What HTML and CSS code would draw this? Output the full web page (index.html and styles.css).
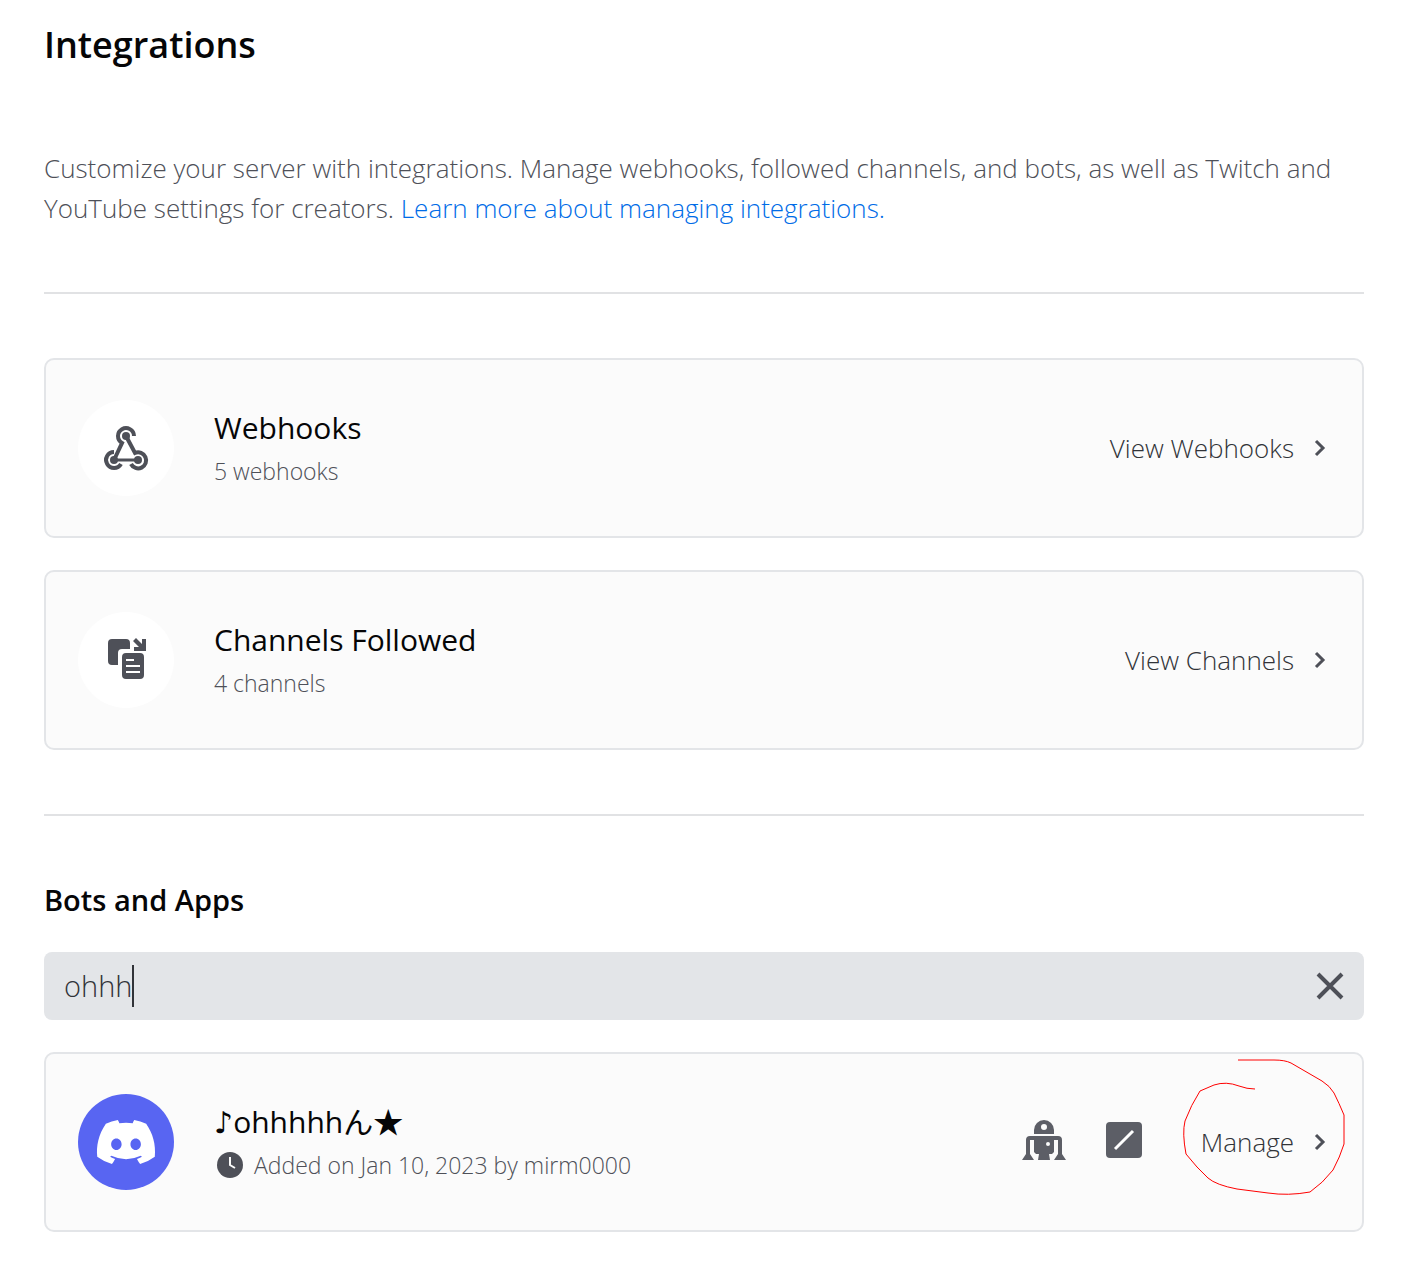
FILE: index.html
```html
<!DOCTYPE html>
<html lang="en">
<head>
<meta charset="utf-8">
<title>Integrations</title>
<link rel="stylesheet" href="styles.css">
</head>
<body>
<main class="page">
  <h1 class="page-title">Integrations</h1>
  <p class="intro">Customize your server with integrations. Manage webhooks, followed channels, and bots, as well as Twitch and YouTube settings for creators. <a class="link" href="#learn">Learn more about managing integrations.</a></p>
  <hr class="divider">
  <section class="cards">
    <article class="card">
      <span class="badge">
        <svg width="48" height="48" viewBox="0 0 48 48" fill="none" stroke="currentColor" stroke-width="4" aria-hidden="true">
          <path d="M32 12A8 8 0 1 0 20 19L12 36"/>
          <path d="M24 12L33 29A8 8 0 1 1 29 40"/>
          <path d="M12 28A8 8 0 1 0 19 40"/>
          <path d="M12 36H36" stroke-width="3"/>
          <g fill="currentColor" stroke="none"><circle cx="24" cy="12" r="4"/><circle cx="12" cy="36" r="4"/><circle cx="36" cy="36" r="4"/></g>
        </svg>
      </span>
      <div class="info">
        <h2 class="name">Webhooks</h2>
        <p class="detail">5 webhooks</p>
      </div>
      <button class="action" type="button">View Webhooks
        <svg width="20" height="20" viewBox="0 0 20 20" aria-hidden="true"><path class="chevron" d="M6 3L13 10L6 17"/></svg>
      </button>
    </article>
    <article class="card">
      <span class="badge">
        <svg width="48" height="48" viewBox="0 12 48 48" fill="currentColor" aria-hidden="true">
          <path d="M10 15H24Q28 15 28 19V25H20Q16 25 16 29V41H10Q6 41 6 37V19Q6 15 10 15Z"/>
          <path fill-rule="evenodd" d="M24 29H38Q42 29 42 33V51Q42 55 38 55H24Q20 55 20 51V33Q20 29 24 29ZM24 35V37H32V35ZM24 41V43H38V41ZM24 47V49H38V47Z"/>
          <path d="M34 14L40 20V15H44V27H32V23H37L31 17Z"/>
        </svg>
      </span>
      <div class="info">
        <h2 class="name">Channels Followed</h2>
        <p class="detail">4 channels</p>
      </div>
      <button class="action" type="button">View Channels
        <svg width="20" height="20" viewBox="0 0 20 20" aria-hidden="true"><path class="chevron" d="M6 3L13 10L6 17"/></svg>
      </button>
    </article>
  </section>
  <hr class="divider">
  <section class="bots">
    <h2 class="section-title"><label for="bot-search">Bots and Apps</label></h2>
    <div class="search">
      <input class="search-input" id="bot-search" type="text" value="ohhh" size="4">
      <span class="caret"></span>
      <button class="clear" type="button" aria-label="Clear">
        <svg width="28" height="28" viewBox="0 0 28 28" aria-hidden="true"><path d="M2 2L26 26M26 2L2 26" stroke="currentColor" stroke-width="4"/></svg>
      </button>
    </div>
    <article class="card">
      <span class="badge badge-discord">
        <svg width="58" height="44" viewBox="0 0 127 96" fill="currentColor" aria-hidden="true"><path d="M107.7 8.07A105.15 105.15 0 0 0 81.47 0a72.06 72.06 0 0 0-3.36 6.83 97.68 97.68 0 0 0-29.11 0A72.37 72.37 0 0 0 45.64 0a105.89 105.89 0 0 0-26.25 8.09C2.79 32.65-1.71 56.6.54 80.21a105.73 105.73 0 0 0 32.17 16.15 77.7 77.7 0 0 0 6.89-11.11 68.42 68.42 0 0 1-10.85-5.18c.91-.66 1.8-1.34 2.66-2a75.57 75.57 0 0 0 64.32 0c.87.71 1.76 1.39 2.66 2a68.68 68.68 0 0 1-10.87 5.19 77 77 0 0 0 6.89 11.1 105.25 105.25 0 0 0 32.19-16.14c2.64-27.38-4.51-51.11-18.9-72.15ZM42.45 65.69C36.18 65.69 31 60 31 53s5-12.74 11.43-12.74S54 46 53.89 53s-5.05 12.69-11.44 12.69Zm42.24 0C78.41 65.69 73.25 60 73.25 53s5-12.74 11.44-12.74S96.23 46 96.12 53s-5.04 12.69-11.43 12.69Z"/></svg>
      </span>
      <div class="info">
        <h2 class="name"><span class="note">♪</span>ohhhhhん★</h2>
        <p class="detail detail-added">
          <svg width="32" height="32" viewBox="0 0 32 32" aria-hidden="true"><circle cx="16" cy="16" r="13" fill="#4e5058"/><path d="M16 8V16L21 19" fill="none" stroke="#fbfbfb" stroke-width="2"/></svg>
          Added on Jan 10, 2023 by mirm0000
        </p>
      </div>
      <div class="features">
        <svg width="44" height="44" viewBox="0 0 44 44" fill="currentColor" aria-hidden="true">
          <path fill-rule="evenodd" d="M12 16V12A10 10 0 0 1 32 12V16ZM22 6A3 3 0 1 0 22 12A3 3 0 1 0 22 6Z"/>
          <path fill-rule="evenodd" d="M8 18H36Q40 18 40 22V36L44 42H32L36 36V22H32V34L30 36H27L28 42H16L17 36H14L12 34V22H8V36L12 42H0L4 36V22Q4 18 8 18ZM26 24A2 2 0 1 0 26 28A2 2 0 1 0 26 24Z"/>
        </svg>
        <svg width="36" height="36" viewBox="0 0 36 36" aria-hidden="true"><rect width="36" height="36" rx="4" fill="currentColor"/><path d="M9 27L27 9" stroke="#fff" stroke-width="3"/></svg>
      </div>
      <button class="action" type="button">Manage
        <svg width="20" height="20" viewBox="0 0 20 20" aria-hidden="true"><path class="chevron" d="M6 3L13 10L6 17"/></svg>
      </button>
      <svg class="scribble" width="164" height="138" viewBox="1182 1058 164 138" aria-hidden="true"><path d="M1238 1060H1274Q1285 1060 1291 1063L1322 1081Q1330 1086 1334 1093Q1339 1103 1344 1115V1144Q1340 1157 1333 1170Q1323 1183 1310 1192Q1288 1196 1268 1193L1237 1189Q1216 1185 1208 1178Q1197 1168 1186 1154Q1182 1133 1185 1121Q1191 1105 1200 1091L1214 1085Q1226 1081 1239 1086Q1247 1089 1255 1089"/></svg>
    </article>
  </section>
</main>
</body>
</html>
```
FILE: styles.css
```css
* { box-sizing: border-box; }

body {
  margin: 0;
  background: #fff;
  color: #4e5058;
  font-family: "Open Sans", "Noto Sans CJK JP", sans-serif;
  font-size: 26px;
  font-weight: 300;
  line-height: 40px;
}

h1, h2, p { margin: 0; }
svg { display: block; flex: none; }
button, input { font: inherit; border: 0; padding: 0; background: none; }

.page { padding: 20px 58px 36px 44px; }

.page-title {
  color: #060607;
  font-size: 36px;
  font-weight: 600;
  line-height: 50px;
}

.intro { margin-top: 78px; }
.link { color: #006ce7; text-decoration: none; }

.divider {
  height: 2px;
  margin: 64px 0;
  border: 0;
  background: #e1e2e4;
}

.cards { display: grid; gap: 32px; }

.card {
  position: relative;
  display: flex;
  align-items: center;
  padding: 40px 32px;
  border: 2px solid #e3e5e8;
  border-radius: 10px;
  background: #fbfbfb;
}

.badge {
  display: grid;
  place-items: center;
  flex: none;
  width: 96px;
  height: 96px;
  margin-right: 40px;
  border-radius: 50%;
  background: #fff;
}
.badge svg { overflow: visible; }
.badge-discord { background: #5865f2; color: #fff; }

.info { flex: 1; padding-bottom: 2px; }
.name {
  color: #060607;
  font-size: 30px;
  font-weight: 400;
  line-height: 48px;
}
.note { font-family: "DejaVu Sans", sans-serif; line-height: 1; }
.detail { font-size: 23px; line-height: 38px; }
.detail-added { display: flex; align-items: center; gap: 8px; }

.action {
  display: flex;
  align-items: center;
  gap: 16px;
  color: #313338;
}
.chevron { fill: none; stroke: #4e5058; stroke-width: 3; }

.features {
  display: flex;
  align-items: center;
  gap: 40px;
  margin-right: 59px;
  padding-bottom: 4px;
  color: #5c5e66;
}

.scribble {
  position: absolute;
  top: 4px;
  right: 16px;
  pointer-events: none;
}
.scribble path { fill: none; stroke: #f00; stroke-width: 1; }

.section-title {
  color: #060607;
  font-size: 29px;
  font-weight: 600;
}

.bots .section-title { margin-bottom: 32px; }

.search {
  display: flex;
  align-items: center;
  height: 68px;
  margin-bottom: 32px;
  padding: 0 20px;
  border-radius: 8px;
  background: #e3e5e8;
}
.search-input {
  field-sizing: content;
  color: #313338;
  font-size: 29px;
  outline: 0;
}
.caret { width: 2px; height: 42px; background: #313338; }
.clear { margin-left: auto; color: #4e5058; }
```
